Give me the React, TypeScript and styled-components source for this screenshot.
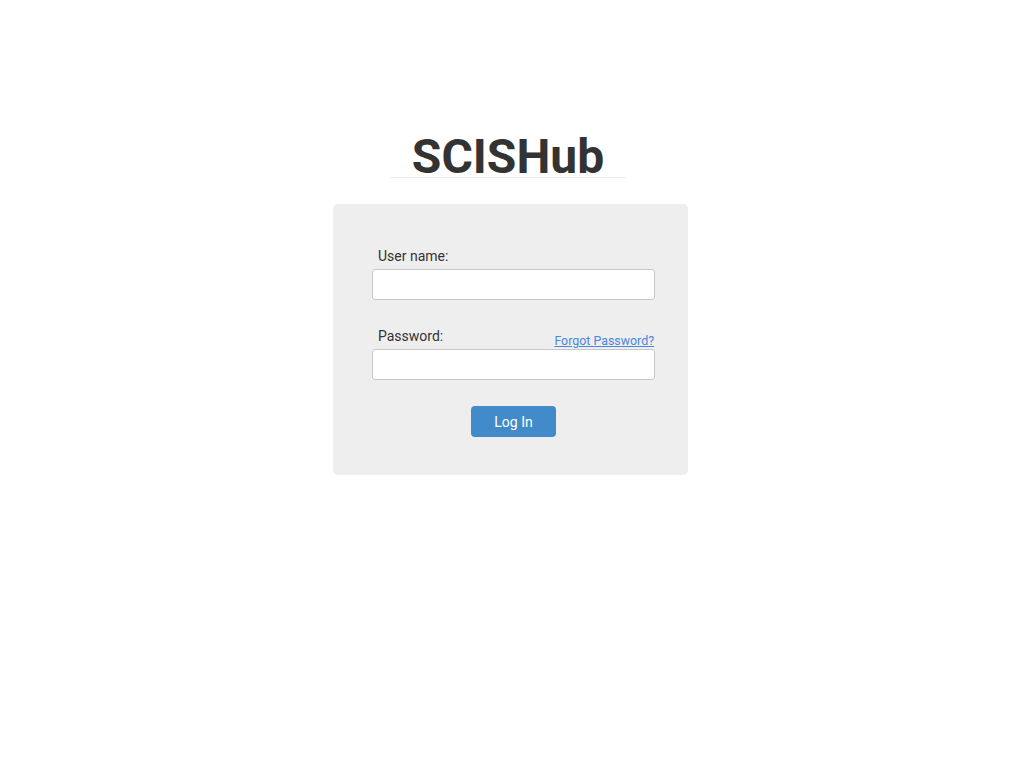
import React from "react";
import styled, { createGlobalStyle } from "styled-components";

const Global = createGlobalStyle`
  html, body { margin: 0; padding: 0; background: #ffffff; }
  body { font-family: Roboto, "Liberation Sans", Arial, sans-serif; color: #333333; }
`;

const Page = styled.div`
  display: flex;
  flex-direction: column;
  align-items: center;
  padding-top: 137px;
  padding-right: 3px;
`;

const Header = styled.div`
  width: 236px;
  margin-right: 5px;
  border-bottom: 1px solid #eaeaea;
  text-align: center;
`;

const Title = styled.h1`
  margin: 0;
  font-size: 48px;
  font-weight: 700;
  line-height: 40px;
  color: #333333;
`;

const Panel = styled.form`
  margin-top: 26px;
  width: 355px;
  box-sizing: border-box;
  background: #eeeeee;
  border-radius: 5px;
  padding: 42px 33px 38px 39px;
  display: flex;
  flex-direction: column;
`;

const Field = styled.div<{ $gap?: number }>`
  display: flex;
  flex-direction: column;
  margin-top: ${(p) => p.$gap ?? 0}px;
`;

const LabelRow = styled.div`
  display: flex;
  justify-content: space-between;
  align-items: flex-end;
  padding-left: 6px;
`;

const Label = styled.label`
  font-size: 14px;
  line-height: 20px;
  color: #333333;
`;

const Link = styled.a`
  font-size: 12.4px;
  line-height: 14px;
  color: #4a86e0;
  text-decoration: underline;
  margin-right: 1px;
  margin-bottom: -2px;
  cursor: pointer;
`;

const Input = styled.input`
  margin-top: 3px;
  height: 31px;
  box-sizing: border-box;
  border: 1px solid #c8c8c8;
  border-radius: 3px;
  background: #ffffff;
  padding: 4px 8px;
  font-family: inherit;
  font-size: 14px;
  outline: none;
`;

const Actions = styled.div`
  display: flex;
  justify-content: center;
  margin-top: 26px;
`;

const Button = styled.button`
  width: 85px;
  height: 31px;
  border: none;
  border-radius: 4px;
  background: #428bca;
  color: #ffffff;
  font-family: inherit;
  font-size: 14px;
  cursor: pointer;
`;

export default function App() {
  return (
    <>
      <Global />
      <Page>
        <Header>
          <Title>SCISHub</Title>
        </Header>
        <Panel onSubmit={(e) => e.preventDefault()}>
          <Field>
            <LabelRow>
              <Label htmlFor="user">User name:</Label>
            </LabelRow>
            <Input id="user" type="text" />
          </Field>
          <Field $gap={26}>
            <LabelRow>
              <Label htmlFor="pass">Password:</Label>
              <Link>Forgot Password?</Link>
            </LabelRow>
            <Input id="pass" type="password" />
          </Field>
          <Actions>
            <Button type="submit">Log In</Button>
          </Actions>
        </Panel>
      </Page>
    </>
  );
}
